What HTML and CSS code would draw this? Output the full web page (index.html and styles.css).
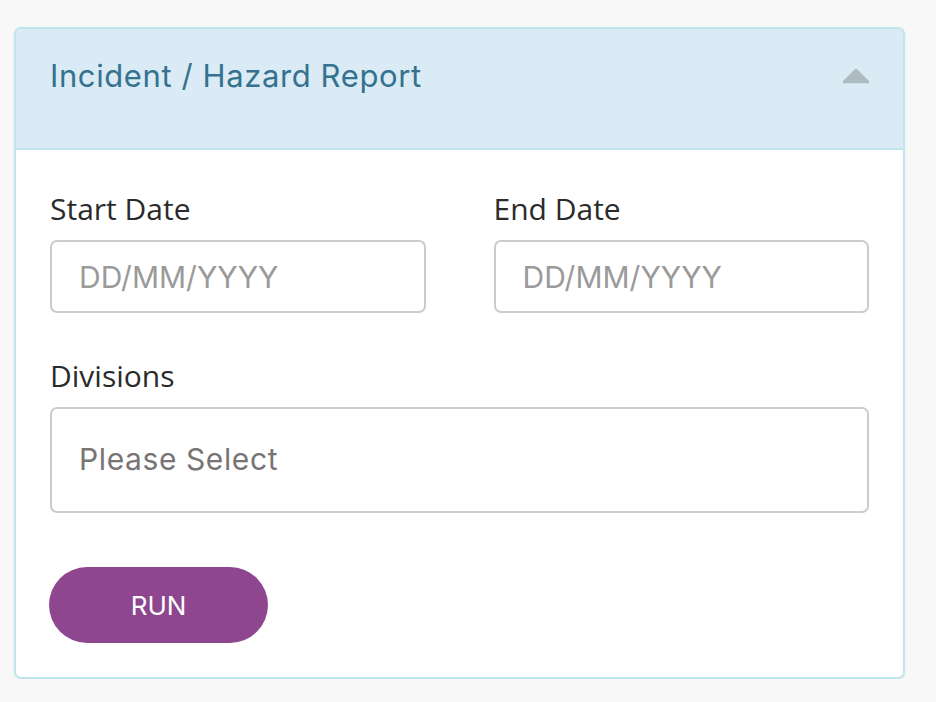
FILE: index.html
```html
<!DOCTYPE html>
<html lang="en">
<head>
<meta charset="utf-8">
<title>Incident / Hazard Report</title>
<link rel="stylesheet" href="styles.css">
</head>
<body>
<section class="card">
  <header class="card-header">
    <h2 class="card-title">Incident / Hazard Report</h2>
    <svg class="toggle" width="28" height="16" viewBox="0 0 28 16" aria-hidden="true">
      <polygon points="2,14 14,2 26,14" fill="#aebcc1" stroke="#aebcc1" stroke-width="2.5" stroke-linejoin="round"/>
    </svg>
  </header>
  <div class="card-body">
    <div class="row">
      <div class="field">
        <label class="label">Start Date</label>
        <input class="control" type="text" placeholder="DD/MM/YYYY">
      </div>
      <div class="field">
        <label class="label">End Date</label>
        <input class="control" type="text" placeholder="DD/MM/YYYY">
      </div>
    </div>
    <div class="field field-wide">
      <label class="label">Divisions</label>
      <div class="select">Please Select</div>
    </div>
    <button class="btn-run" type="button">RUN</button>
  </div>
</section>
</body>
</html>
```

FILE: styles.css
```css
* { box-sizing: border-box; }

body {
  margin: 0;
  background: #f8f8f8;
  padding: 27px 0 0 14px;
  font-family: "Open Sans", "Noto Sans", sans-serif;
}

.card {
  width: 891px;
  background: #fff;
  border: 2px solid #bfe5ee;
  border-radius: 7px;
  box-shadow: 0 1px 3px rgba(0, 0, 0, 0.06);
  overflow: hidden;
}

.card-header {
  height: 121px;
  background: #daebf5;
  border-bottom: 2px solid #bfe5ee;
  display: flex;
  align-items: flex-start;
  justify-content: space-between;
  padding: 28px 33px 0 34px;
}

.card-title {
  margin: 0;
  font-family: Inter, "Noto Sans", sans-serif;
  font-weight: 400;
  font-size: 31px;
  letter-spacing: 0.6px;
  line-height: 37px;
  color: #34728f;
}

.toggle {
  display: block;
  margin-top: 11px;
}

.card-body {
  padding: 38px 34px 34px 34px;
}

.row {
  display: grid;
  grid-template-columns: 1fr 1fr;
  column-gap: 68px;
}

.field {
  display: flex;
  flex-direction: column;
}

.field-wide {
  margin-top: 42px;
}

.label {
  font-size: 30px;
  line-height: 42px;
  color: #2b2b2b;
  margin-bottom: 10px;
}

.control {
  height: 73px;
  border: 2px solid #cccccc;
  border-radius: 7px;
  padding: 0 27px;
  font-family: Inter, "Noto Sans", sans-serif;
  font-size: 30px;
  color: #333;
  background: #fff;
  outline: none;
  width: 100%;
}

.control::placeholder {
  color: #9a9a9a;
}

.select {
  height: 106px;
  border: 2px solid #cccccc;
  border-radius: 7px;
  padding: 0 27px 2px;
  display: flex;
  align-items: center;
  font-family: Inter, "Noto Sans", sans-serif;
  font-size: 30px;
  letter-spacing: 0.6px;
  color: #787474;
}

.btn-run {
  display: block;
  margin-top: 54px;
  margin-left: -1px;
  width: 219px;
  height: 76px;
  border: none;
  border-radius: 38px;
  background: #8e468f;
  color: #fff;
  font-family: Inter, "Noto Sans", sans-serif;
  font-size: 26px;
  font-weight: 400;
  cursor: pointer;
}
```
